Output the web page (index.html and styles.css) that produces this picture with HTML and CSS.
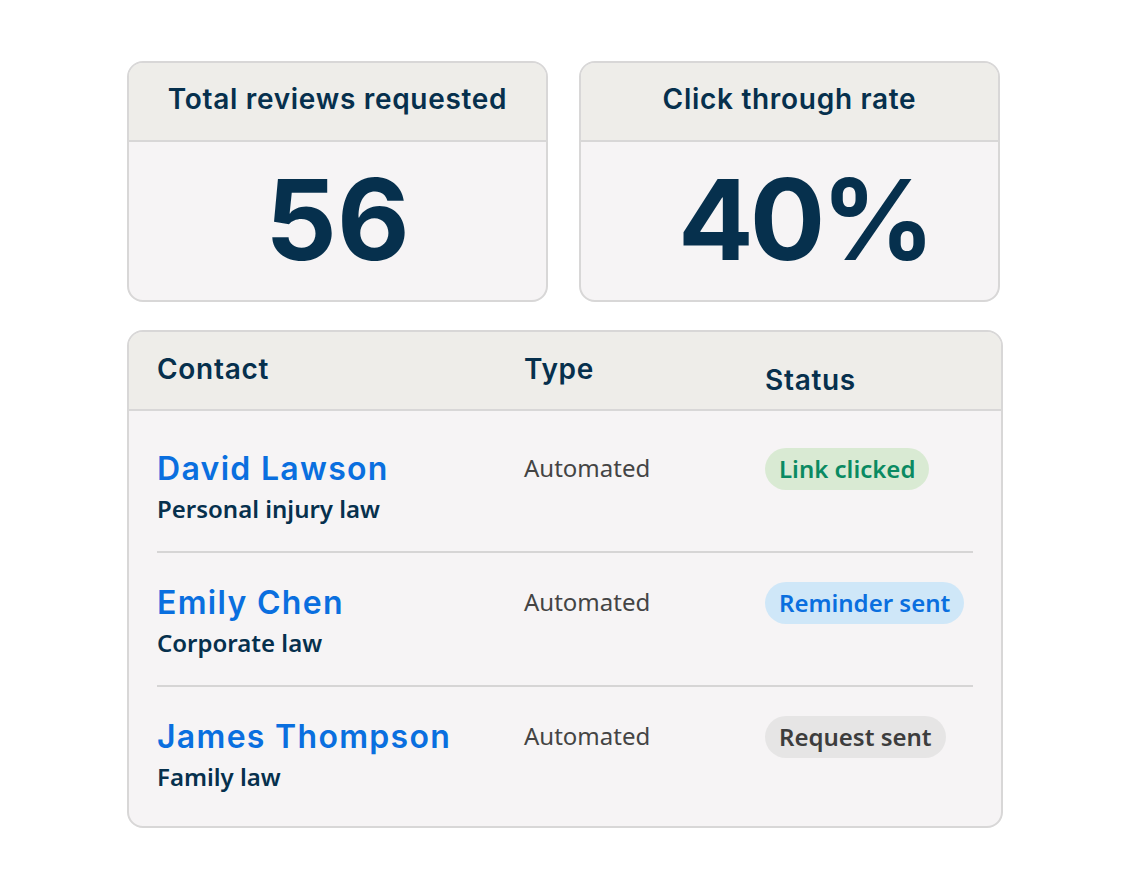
FILE: index.html
```html
<!DOCTYPE html>
<html>
<head>
    <link rel="stylesheet" href="styles.css">
</head>
<body>
    <div class="dashboard">
        <div class="stats">
            <div class="stat-card">
                <div class="stat-title">Total reviews requested</div>
                <div class="stat-value">56</div>
            </div>
            <div class="stat-card">
                <div class="stat-title">Click through rate</div>
                <div class="stat-value stat-rate">40%</div>
            </div>
        </div>

        <div class="contacts">
            <div class="contacts-head">
                <span class="col-title">Contact</span>
                <span class="col-title">Type</span>
                <span class="col-title status-title">Status</span>
            </div>

            <div class="contacts-body">
                <div class="contact-row">
                    <div>
                        <div class="contact-name">David Lawson</div>
                        <div class="contact-area">Personal injury law</div>
                    </div>
                    <div class="contact-type">Automated</div>
                    <div><span class="badge badge-clicked">Link clicked</span></div>
                </div>

                <div class="contact-row">
                    <div>
                        <div class="contact-name">Emily Chen</div>
                        <div class="contact-area">Corporate law</div>
                    </div>
                    <div class="contact-type">Automated</div>
                    <div><span class="badge badge-reminder">Reminder sent</span></div>
                </div>

                <div class="contact-row">
                    <div>
                        <div class="contact-name">James Thompson</div>
                        <div class="contact-area">Family law</div>
                    </div>
                    <div class="contact-type">Automated</div>
                    <div><span class="badge badge-sent">Request sent</span></div>
                </div>
            </div>
        </div>
    </div>
</body>
</html>
```

FILE: styles.css
```css
body {
    margin: 0;
    background-color: #fff;
    font-family: "Noto Sans", Arial, sans-serif;
    color: #06304d;
}

.dashboard {
    width: 876px;
    padding: 61px 0 0 127px;
}

.stats {
    display: grid;
    grid-template-columns: 421px 421px;
    gap: 31px;
    margin-bottom: 28px;
}

.stat-card {
    border: 2px solid #d8d7d7;
    border-radius: 16px;
    overflow: hidden;
    background-color: #f6f4f5;
}

.stat-title {
    height: 72px;
    padding-bottom: 5px;
    display: flex;
    align-items: center;
    justify-content: center;
    background-color: #eeede9;
    border-bottom: 2px solid #d8d7d7;
    font-family: Inter, sans-serif;
    font-size: 28px;
    font-weight: 600;
    letter-spacing: 0.7px;
}

.stat-value {
    height: 154px;
    padding-bottom: 4px;
    display: flex;
    align-items: center;
    justify-content: center;
    font-family: Inter, sans-serif;
    font-size: 112px;
    font-weight: 700;
}

.stat-rate {
    padding-left: 30px;
    letter-spacing: -4px;
}

.contacts {
    border: 2px solid #d8d7d7;
    border-radius: 16px;
    overflow: hidden;
    background-color: #f6f4f5;
}

.contacts-head {
    height: 77px;
    display: grid;
    grid-template-columns: 367px 241px 1fr;
    padding: 0 28px;
    background-color: #eeede9;
    border-bottom: 2px solid #d8d7d7;
}

.col-title {
    padding-top: 20px;
    font-family: Inter, sans-serif;
    font-size: 28px;
    font-weight: 600;
    letter-spacing: 0.7px;
}

.status-title {
    padding-top: 31px;
}

.contacts-body {
    padding: 8px 28px 5px;
}

.contact-row {
    display: grid;
    grid-template-columns: 367px 241px 1fr;
    height: 134px;
    padding-top: 27px;
    box-sizing: border-box;
    border-bottom: 2px solid #d6d5d5;
}

.contact-row:last-child {
    border-bottom: none;
}

.contact-name {
    padding-top: 3px;
    font-family: Inter, sans-serif;
    font-size: 32px;
    font-weight: 600;
    line-height: 40px;
    letter-spacing: 1.3px;
    color: #0a6fdf;
}

.contact-area {
    margin-top: 5px;
    font-size: 24px;
    font-weight: 600;
    line-height: 30px;
}

.contact-type {
    padding-top: 5px;
    font-size: 24px;
    color: #444;
}

.badge {
    display: inline-block;
    margin-top: 2px;
    padding: 4px 14px;
    border-radius: 21px;
    font-size: 24px;
    font-weight: 600;
    line-height: 34px;
}

.badge-clicked {
    background-color: #d9ead3;
    color: #0a8a62;
}

.badge-reminder {
    background-color: #cfe7f8;
    color: #0a6fdf;
}

.badge-sent {
    background-color: #e6e5e5;
    color: #3d3d3d;
}
```
